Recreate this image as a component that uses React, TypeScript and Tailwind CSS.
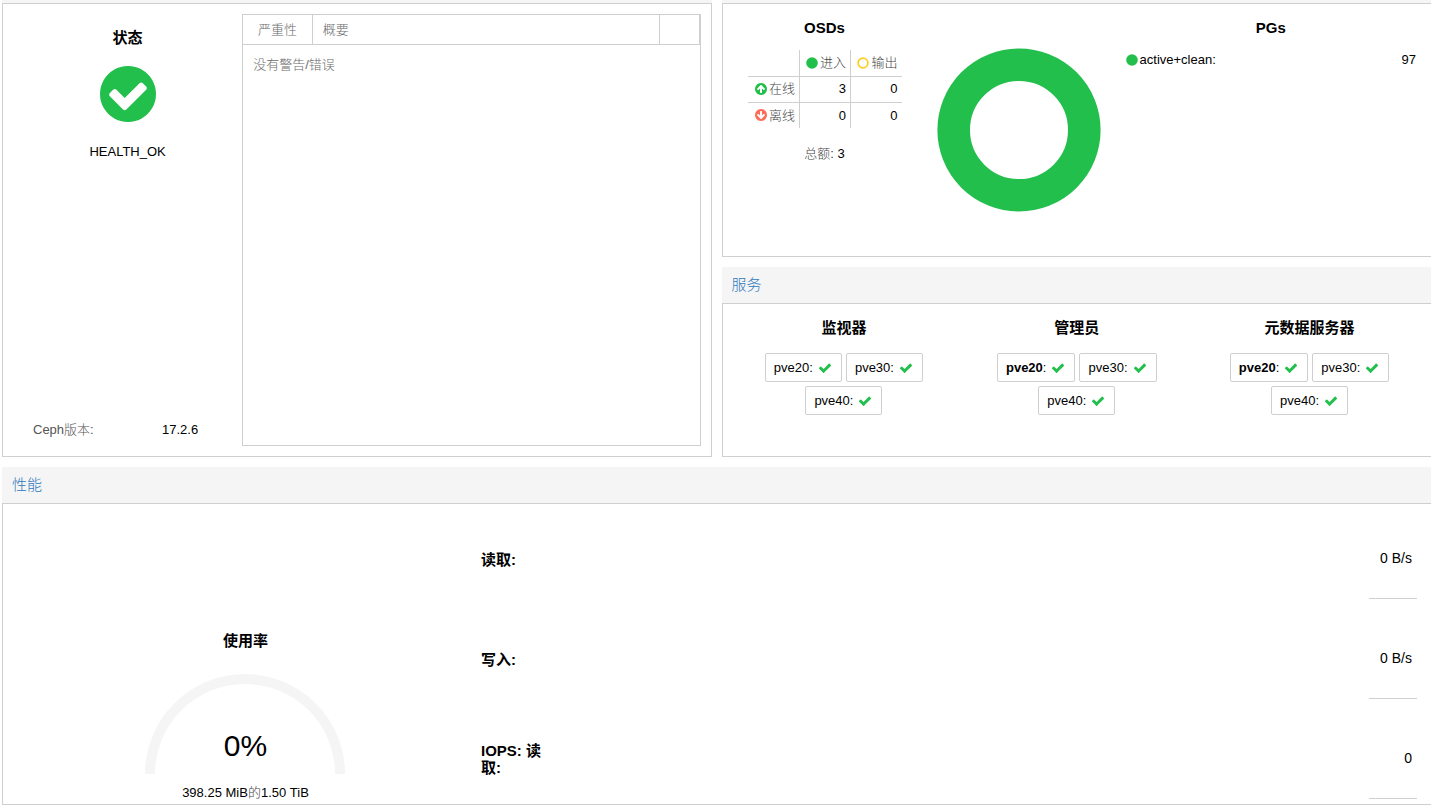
import { ReactNode } from 'react';

const DISC =
  'm252 162q0 209-103 385.5t-279.5 279.5-385.5 103-385.5-103-279.5-279.5-103-385.5 103-385.5 279.5-279.5 385.5-103 385.5 103 279.5 279.5 103 385.5z';
const CHECK_CIRCLE =
  'M1412 734q0-28-18-46l-91-90q-19-19-45-19t-45 19l-408 407-226-226q-19-19-45-19t-45 19l-91 90q-18 18-18 46 0 27 18 45l362 362q19 19 45 19 27 0 46-19l543-543q18-18 18-45z' +
  DISC;
const ARROW_CIRCLE =
  'M1412 895q0-27-18-45l-362-362-91-91q-18-18-45-18t-45 18l-91 91-362 362q-18 18-18 45t18 45l91 91q18 18 45 18t45-18l189-189v502q0 26 19 45t45 19h128q26 0 45-19t19-45v-502l189 189q19 19 45 19t45-19l91-91q18-18 18-45zm252 1q0 209-103 385.5t-279.5 279.5-385.5 103-385.5-103-279.5-279.5-103-385.5 103-385.5 279.5-279.5 385.5-103 385.5 103 279.5 279.5 103 385.5z';
const CHECK =
  'M1671 566q0 40-28 68l-724 724-136 136q-28 28-68 28t-68-28l-136-136-362-362q-28-28-28-68t28-68l136-136q28-28 68-28t68 28l294 295 656-657q28-28 68-28t68 28l136 136q28 28 28 68z';

function Icon({ path, className }: { path: string; className: string }) {
  return (
    <svg viewBox="128 128 1536 1536" fill="currentColor" aria-hidden="true" className={className}>
      <path d={path} />
    </svg>
  );
}

function Dot({ hollow }: { hollow?: boolean }) {
  return (
    <svg viewBox="0 0 12 12" aria-hidden="true" className="size-3 shrink-0">
      {hollow ? (
        <circle cx="6" cy="6" r="4.9" fill="none" stroke="#ffcc22" strokeWidth="1.7" />
      ) : (
        <circle cx="6" cy="6" r="5.8" fill="#23bf4d" />
      )}
    </svg>
  );
}

function Heading({ children }: { children: ReactNode }) {
  return <h3 className="text-center text-[15px] leading-5 font-bold">{children}</h3>;
}

function PanelTitle({ children }: { children: ReactNode }) {
  return (
    <h2 className="h-9 bg-[#f5f5f5] px-[10px] text-[15px] leading-9 font-light text-[#2f78c0]">
      {children}
    </h2>
  );
}

interface Service {
  title: string;
  hosts: { name: string; active?: boolean }[];
}

const services: Service[] = [
  { title: '监视器', hosts: [{ name: 'pve20' }, { name: 'pve30' }, { name: 'pve40' }] },
  { title: '管理员', hosts: [{ name: 'pve20', active: true }, { name: 'pve30' }, { name: 'pve40' }] },
  { title: '元数据服务器', hosts: [{ name: 'pve20', active: true }, { name: 'pve30' }, { name: 'pve40' }] },
];

const metrics = [
  { label: '读取:', value: '0 B/s' },
  { label: '写入:', value: '0 B/s' },
  { label: 'IOPS: 读取:', value: '0' },
];

function HealthPanel() {
  return (
    <section className="grid grid-cols-[1fr_2fr] border border-[#cfcfcf] p-[10px]">
      <div className="flex flex-col items-center pt-[14px]">
        <Heading>状态</Heading>
        <Icon path={CHECK_CIRCLE} className="mt-[18px] size-14 text-[#23bf4d]" />
        <p className="mt-5 leading-5">HEALTH_OK</p>
        <dl className="mt-auto mb-[6px] flex w-full px-5 leading-5">
          <dt className="w-[129px] text-[#555]">Ceph版本:</dt>
          <dd>17.2.6</dd>
        </dl>
      </div>
      <div className="border border-[#cfcfcf]">
        <table className="w-full table-fixed border-collapse text-left text-[#6b6b6b]">
          <thead>
            <tr className="h-[29px] border-b border-[#cfcfcf]">
              <th className="w-[69px] border-r border-[#cfcfcf] text-center font-light">严重性</th>
              <th className="px-[10px] font-light">概要</th>
              <th className="w-[40px] border-x border-[#cfcfcf]" />
            </tr>
          </thead>
          <tbody>
            <tr>
              <td colSpan={3} className="px-[10px] py-[10px] leading-5">
                没有警告/错误
              </td>
            </tr>
          </tbody>
        </table>
      </div>
    </section>
  );
}

function OsdPanel() {
  return (
    <section className="grid min-h-[254px] grid-cols-[5fr_5fr_8fr] border border-r-0 border-[#cfcfcf] px-[5px] pt-[14px]">
      <div className="flex flex-col items-center">
        <Heading>OSDs</Heading>
        <table className="mt-3 border-collapse text-right">
          <thead>
            <tr className="h-[26px] border-b border-[#cfcfcf]">
              <td />
              <th className="border-l border-[#cfcfcf] px-1 font-light text-[#444]">
                <span className="flex items-center justify-end gap-[2px]">
                  <Dot />
                  进入
                </span>
              </th>
              <th className="border-l border-[#cfcfcf] px-1 font-light text-[#444]">
                <span className="flex items-center justify-end gap-[2px]">
                  <Dot hollow />
                  输出
                </span>
              </th>
            </tr>
          </thead>
          <tbody>
            <tr className="h-[26px] border-b border-[#cfcfcf]">
              <th className="w-[52px] px-1 font-light text-[#444]">
                <span className="flex items-center justify-end gap-[2px]">
                  <Icon path={ARROW_CIRCLE} className="size-3 text-[#23bf4d]" />
                  在线
                </span>
              </th>
              <td className="w-[51px] border-l border-[#cfcfcf] px-1">3</td>
              <td className="w-[51px] border-l border-[#cfcfcf] px-1">0</td>
            </tr>
            <tr className="h-[26px]">
              <th className="px-1 font-light text-[#444]">
                <span className="flex items-center justify-end gap-[2px]">
                  <Icon path={ARROW_CIRCLE} className="size-3 rotate-180 text-[#ff6c59]" />
                  离线
                </span>
              </th>
              <td className="border-l border-[#cfcfcf] px-1">0</td>
              <td className="border-l border-[#cfcfcf] px-1">0</td>
            </tr>
          </tbody>
        </table>
        <p className="mt-4 leading-5">
          <span className="text-[#444]">总额:</span> 3
        </p>
      </div>
      <div className="flex justify-center pt-[30px]">
        <svg viewBox="0 0 164 164" role="img" aria-label="PGs" className="size-[164px]">
          <circle cx="82" cy="82" r="65.3" fill="none" stroke="#23bf4d" strokeWidth="32.6" />
        </svg>
      </div>
      <div className="px-[10px]">
        <Heading>PGs</Heading>
        <div className="mt-3 flex items-center leading-5">
          <Dot />
          <span className="ml-[2px]">active+clean:</span>
          <span className="ml-auto">97</span>
        </div>
      </div>
    </section>
  );
}

function ServicesPanel() {
  return (
    <section>
      <PanelTitle>服务</PanelTitle>
      <div className="grid min-h-[154px] grid-cols-3 border border-r-0 border-[#cfcfcf] px-[5px] pt-[14px]">
        {services.map((service) => (
          <div key={service.title}>
            <Heading>{service.title}</Heading>
            <ul className="mt-[15px] flex flex-wrap justify-center gap-1">
              {service.hosts.map((host) => (
                <li
                  key={host.name}
                  className="flex h-[29px] items-center rounded-xs border border-[#cfcfcf] pr-[10px] pl-2"
                >
                  <span className={host.active ? 'font-bold' : ''}>{host.name}</span>
                  <span>:</span>
                  <Icon path={CHECK} className="ml-[6px] size-3 text-[#23bf4d]" />
                </li>
              ))}
            </ul>
          </div>
        ))}
      </div>
    </section>
  );
}

function PerformancePanel() {
  return (
    <section>
      <PanelTitle>性能</PanelTitle>
      <div className="flex border border-r-0 border-[#cfcfcf] pr-[9px] pl-[10px]">
        <div className="flex w-[33%] flex-col items-center pt-[127px]">
          <Heading>使用率</Heading>
          <div className="relative mt-[23px]">
            <svg viewBox="0 0 200 100" aria-hidden="true" className="h-[100px] w-[200px]">
              <path d="M5 100a95 95 0 0 1 190 0" fill="none" stroke="#f5f5f5" strokeWidth="10" />
            </svg>
            <p className="absolute inset-x-0 bottom-2 text-center text-[30px] leading-10">0%</p>
          </div>
          <p className="mt-[9px] leading-5">
            398.25 MiB<span className="text-[#444]">的</span>1.50 TiB
          </p>
        </div>
        <div className="flex-1">
          {metrics.map((metric) => (
            <div key={metric.label} className="flex h-[100px] justify-between pr-[5px] pl-[3px]">
              <h3 className="flex w-[70px] items-center pt-[10px] text-[15px] leading-[17px] font-bold">
                {metric.label}
              </h3>
              <div className="flex flex-col items-end pt-11">
                <span className="px-[5px] text-sm">{metric.value}</span>
                <div className="mt-[30px] w-12 border-t border-[#cfcfcf]" />
              </div>
            </div>
          ))}
        </div>
      </div>
    </section>
  );
}

export default function App() {
  return (
    <main className="bg-white pl-[2px] font-['Liberation_Sans','Noto_Sans_CJK_SC',sans-serif] text-[13px] font-light text-black">
      <div className="grid grid-cols-2 gap-[10px]">
        <div className="grid grid-rows-[3px_1fr]">
          <div className="bg-[#f5f5f5]" />
          <HealthPanel />
        </div>
        <div>
          <div className="h-[3px] bg-[#f5f5f5]" />
          <OsdPanel />
          <div className="mt-[10px]">
            <ServicesPanel />
          </div>
        </div>
      </div>
      <div className="mt-[10px]">
        <PerformancePanel />
      </div>
    </main>
  );
}
